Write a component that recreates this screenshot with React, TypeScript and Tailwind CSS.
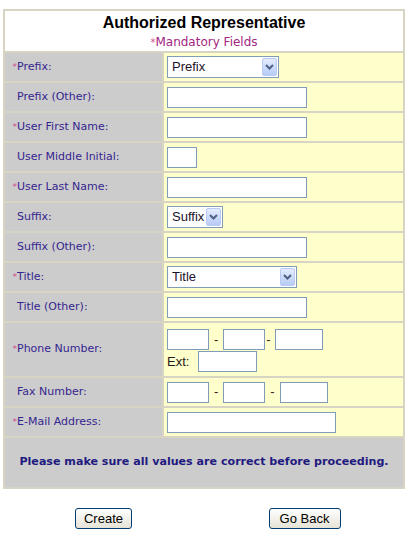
import React from 'react'

type Row = {
  label: string
  required?: boolean
  field: React.ReactNode
}

const TextBox = ({ className = 'w-[140px]' }: { className?: string }) => (
  <input
    type="text"
    className={`h-[21px] border border-[#7f9db9] bg-white outline-none ${className}`}
  />
)

const Chevron = () => (
  <svg width="9" height="6" viewBox="0 0 9 6">
    <path d="M1 1 L4.5 4.5 L8 1" fill="none" stroke="#4d6185" strokeWidth="2" />
  </svg>
)

const XpSelect = ({ text, className }: { text: string; className: string }) => (
  <div className={`flex h-[22px] border border-[#7f9db9] bg-white ${className}`}>
    <span className="flex-1 pl-[4px] text-[13px] leading-[20px] text-[#1c1228] font-['Liberation_Sans',Arial,sans-serif]">
      {text}
    </span>
    <span className="m-px flex w-[15px] items-center justify-center rounded-[2px] border border-[#b9cbf4] bg-gradient-to-b from-[#e3ebfe] to-[#b8ccf6]">
      <Chevron />
    </span>
  </div>
)

const Dash = ({ className = 'mx-[5px]' }: { className?: string }) => (
  <span className={`text-[13px] text-[#402020] font-['Liberation_Sans',Arial,sans-serif] ${className}`}>-</span>
)

const rows: Row[] = [
  { label: 'Prefix:', required: true, field: <XpSelect text="Prefix" className="w-[112px]" /> },
  { label: 'Prefix (Other):', field: <TextBox /> },
  { label: 'User First Name:', required: true, field: <TextBox /> },
  { label: 'User Middle Initial:', field: <TextBox className="w-[30px]" /> },
  { label: 'User Last Name:', required: true, field: <TextBox /> },
  { label: 'Suffix:', field: <XpSelect text="Suffix" className="w-[56px]" /> },
  { label: 'Suffix (Other):', field: <TextBox /> },
  { label: 'Title:', required: true, field: <XpSelect text="Title" className="w-[130px]" /> },
  { label: 'Title (Other):', field: <TextBox /> },
]

const Label = ({ label, required }: { label: string; required?: boolean }) => (
  <div className="flex items-center bg-[#cccccc] pl-[4px] text-[11px] text-[#35258f]">
    <span className="inline-block w-[8px] text-right text-[9px] leading-[11px] self-center text-[#d24a8c]">
      {required ? '*' : ''}
    </span>
    {label}
  </div>
)

export default function App() {
  return (
    <div className="h-[538px] w-[415px] bg-white pl-[3px] pt-[9px] font-['DejaVu_Sans',Verdana,sans-serif]">
      <div className="flex w-[402px] flex-col gap-[2px] bg-[#d8d4c4] p-[2px]">
        <div className="flex h-[40px] flex-col items-center bg-white">
          <div className="mt-[2px] text-[16px] font-bold leading-[19px] text-black font-['Liberation_Sans',Arial,sans-serif]">
            Authorized Representative
          </div>
          <div className="mt-[2px] text-[12px] leading-[16px] text-[#a3267f]">
            <span className="text-[10px] text-[#d24a8c]">*</span>Mandatory Fields
          </div>
        </div>

        {rows.map((r) => (
          <div key={r.label} className="grid h-[28px] grid-cols-[157px_1fr] gap-[2px]">
            <Label label={r.label} required={r.required} />
            <div className="flex items-center bg-[#ffffcc] pl-[3px]">{r.field}</div>
          </div>
        ))}

        <div className="grid h-[53px] grid-cols-[157px_1fr] gap-[2px]">
          <Label label="Phone Number:" required />
          <div className="flex flex-col justify-center gap-[1px] bg-[#ffffcc] pl-[3px] pt-[2px]">
            <div className="flex items-center">
              <TextBox className="w-[42px]" />
              <Dash />
              <TextBox className="w-[42px]" />
              <Dash className="ml-[1px] mr-[4px]" />
              <TextBox className="w-[48px]" />
            </div>
            <div className="flex items-center">
              <span className="mr-[9px] text-[13px] text-[#2a1a1a] font-['Liberation_Sans',Arial,sans-serif]">Ext:</span>
              <TextBox className="w-[59px]" />
            </div>
          </div>
        </div>

        <div className="grid h-[28px] grid-cols-[157px_1fr] gap-[2px]">
          <Label label="Fax Number:" />
          <div className="flex items-center bg-[#ffffcc] pl-[3px]">
            <TextBox className="w-[42px]" />
            <Dash />
            <TextBox className="w-[42px]" />
            <Dash />
            <TextBox className="w-[48px]" />
          </div>
        </div>

        <div className="grid h-[28px] grid-cols-[157px_1fr] gap-[2px]">
          <Label label="E-Mail Address:" required />
          <div className="flex items-center bg-[#ffffcc] pl-[3px]">
            <TextBox className="w-[169px]" />
          </div>
        </div>

        <div className="flex h-[49px] items-center justify-center bg-[#cccccc] text-[11.1px] font-bold text-[#1f1a80]">
          Please make sure all values are correct before proceeding.
        </div>
      </div>

      <div className="mt-[19px] flex w-[402px]">
        <div className="flex flex-1 justify-center">
          <button className="h-[21px] w-[57px] rounded-[3px] border border-[#003c74] bg-gradient-to-b from-white to-[#e6e3d6] text-[13px] text-black font-['Liberation_Sans',Arial,sans-serif]">
            Create
          </button>
        </div>
        <div className="flex flex-1 justify-center">
          <button className="h-[21px] w-[72px] rounded-[3px] border border-[#003c74] bg-gradient-to-b from-white to-[#e6e3d6] text-[13px] text-black font-['Liberation_Sans',Arial,sans-serif]">
            Go Back
          </button>
        </div>
      </div>
    </div>
  )
}
